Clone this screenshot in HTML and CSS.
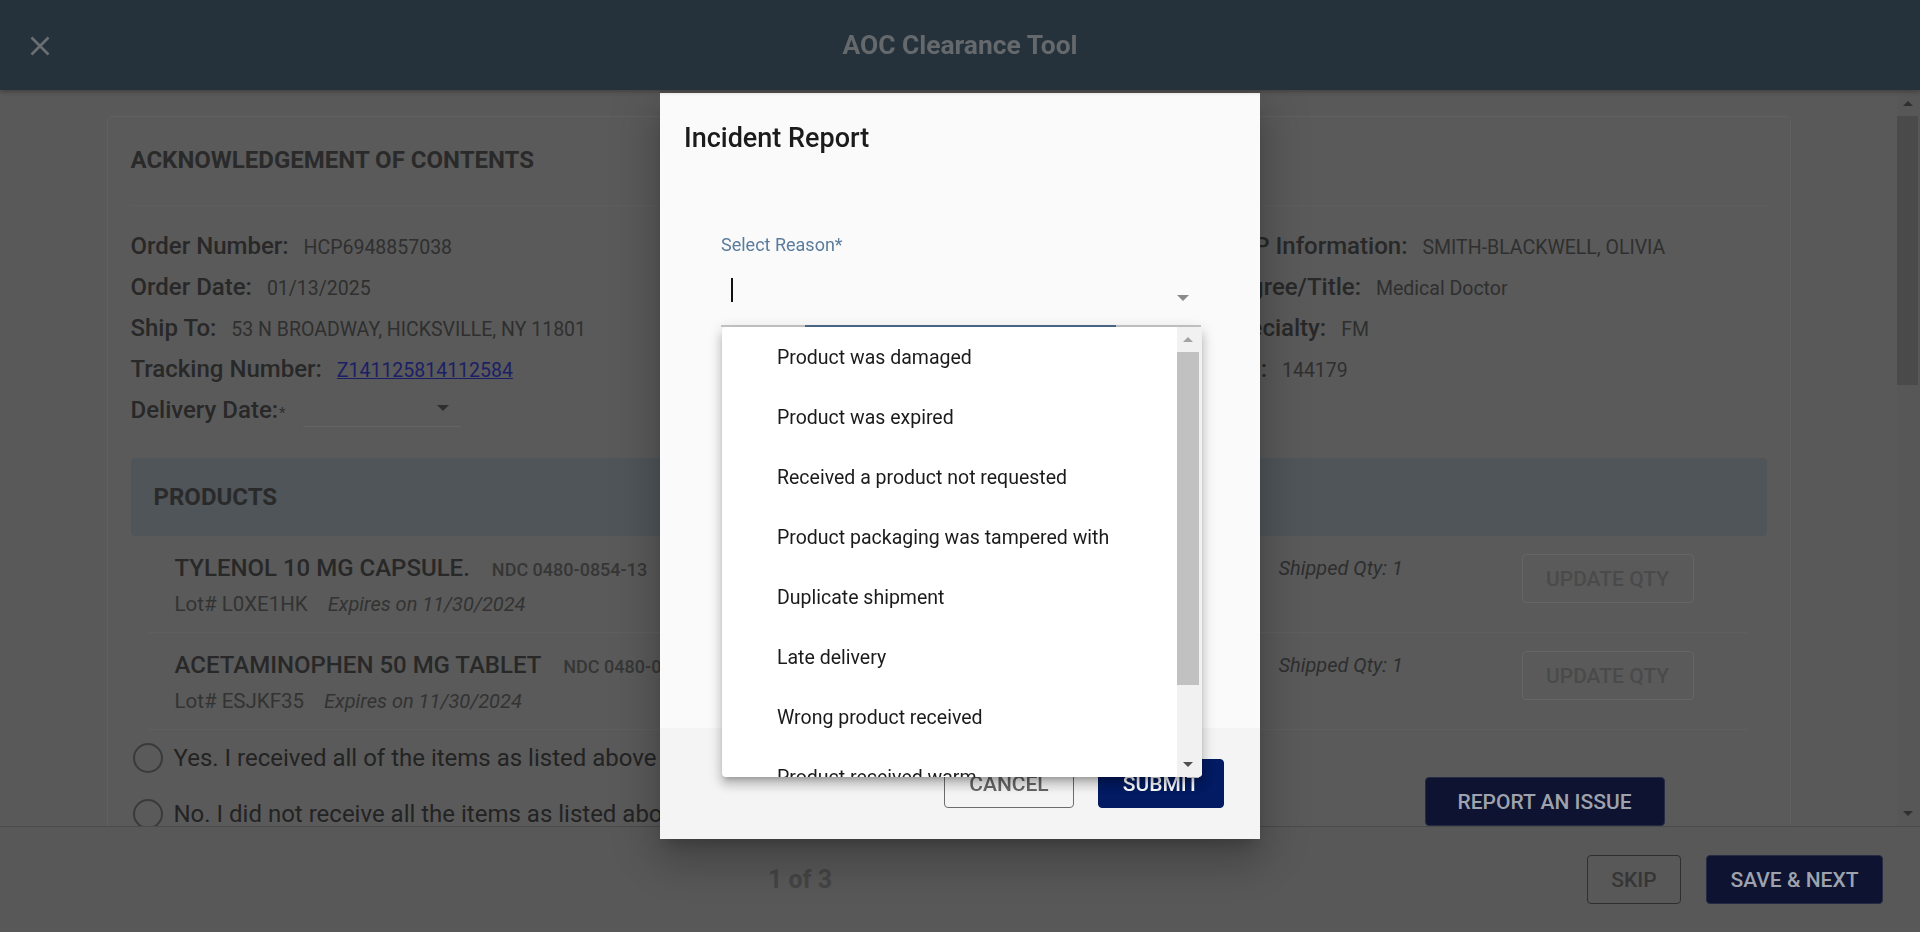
FILE: index.html
```html
<!DOCTYPE html>
<html lang="en">
<head>
<meta charset="utf-8">
<title>AOC Clearance Tool</title>
<link rel="stylesheet" href="styles.css">
</head>
<body>
<div class="app">
  <header class="topbar">
    <div class="topbar-left">
      <svg class="close-x" width="20" height="20" viewBox="0 0 20 20" aria-hidden="true"><path d="M1.5 1.5 L18.5 18.5 M18.5 1.5 L1.5 18.5" stroke="#6b6f72" stroke-width="2.6" fill="none"/></svg>
    </div>
    <h1 class="app-title">AOC Clearance Tool</h1>
    <div class="topbar-right"></div>
  </header>

  <div class="main">
    <div class="scroll-content">
      <section class="card">
        <div class="card-head"><h2>ACKNOWLEDGEMENT OF CONTENTS</h2></div>

        <div class="info-grid">
          <div class="info-col info-left">
            <div class="info-row"><span class="lbl">Order Number:</span><span class="val">HCP6948857038</span></div>
            <div class="info-row"><span class="lbl">Order Date:</span><span class="val">01/13/2025</span></div>
            <div class="info-row"><span class="lbl">Ship To:</span><span class="val">53 N BROADWAY, HICKSVILLE, NY 11801</span></div>
            <div class="info-row"><span class="lbl">Tracking Number:</span><a class="val link" href="#">Z141125814112584</a></div>
            <div class="info-row"><span class="lbl">Delivery Date:</span><span class="req">*</span><span class="mini-select"><span class="caret dark"></span></span></div>
          </div>
          <div class="info-col info-right">
            <div class="info-row"><span class="lbl">HCP Information:</span><span class="val">SMITH-BLACKWELL, OLIVIA</span></div>
            <div class="info-row"><span class="lbl">Degree/Title:</span><span class="val">Medical Doctor</span></div>
            <div class="info-row"><span class="lbl">Specialty:</span><span class="val">FM</span></div>
            <div class="info-row"><span class="lbl">NPI:</span><span class="val">144179</span></div>
          </div>
        </div>

        <div class="products-band">PRODUCTS</div>

        <div class="product-list">
          <div class="product">
            <div class="prod-main">
              <div class="prod-title"><span class="prod-name">TYLENOL 10 MG CAPSULE.</span><span class="ndc">NDC 0480-0854-13</span></div>
              <div class="prod-lot"><span>Lot# L0XE1HK</span><em>Expires on 11/30/2024</em></div>
            </div>
            <div class="prod-qty">Shipped Qty: 1</div>
            <div class="prod-action"><button class="btn btn-ghost">UPDATE QTY</button></div>
          </div>
          <div class="product">
            <div class="prod-main">
              <div class="prod-title"><span class="prod-name">ACETAMINOPHEN 50 MG TABLET</span><span class="ndc">NDC 0480-0854-14</span></div>
              <div class="prod-lot"><span>Lot# ESJKF35</span><em>Expires on 11/30/2024</em></div>
            </div>
            <div class="prod-qty">Shipped Qty: 1</div>
            <div class="prod-action"><button class="btn btn-ghost">UPDATE QTY</button></div>
          </div>
        </div>

        <div class="confirm-row">
          <div class="radios">
            <label class="radio"><span class="circle"></span><span>Yes. I received all of the items as listed above and in good condition.</span></label>
            <label class="radio"><span class="circle"></span><span>No. I did not receive all the items as listed above.</span></label>
          </div>
          <button class="btn btn-navy btn-report">REPORT AN ISSUE</button>
        </div>
        <div class="card-tail"></div>
      </section>
    </div>
    <div class="page-scrollbar">
      <div class="psb-btn"><span class="tri up"></span></div>
      <div class="psb-track"><div class="psb-thumb"></div></div>
      <div class="psb-btn"><span class="tri down"></span></div>
    </div>
  </div>

  <footer class="bottombar">
    <div class="pager">1 of 3</div>
    <button class="btn btn-skip">SKIP</button>
    <button class="btn btn-navy btn-save">SAVE &amp; NEXT</button>
  </footer>
</div>

<div class="overlay">
  <div class="modal">
    <div class="modal-body">
      <h3 class="modal-title">Incident Report</h3>
      <div class="field">
        <div class="field-label">Select Reason*</div>
        <div class="field-input">
          <span class="cursor"></span>
          <span class="caret grey"></span>
        </div>
        <div class="field-underline"></div>
      </div>
    </div>
    <div class="modal-footer">
      <button class="btn btn-cancel">CANCEL</button>
      <button class="btn btn-submit">SUBMIT</button>
    </div>

    <div class="dropdown">
      <ul class="options">
        <li>Product was damaged</li>
        <li>Product was expired</li>
        <li>Received a product not requested</li>
        <li>Product packaging was tampered with</li>
        <li>Duplicate shipment</li>
        <li>Late delivery</li>
        <li>Wrong product received</li>
        <li>Product received warm</li>
        <li>Other</li>
      </ul>
      <div class="dd-scrollbar">
        <div class="dsb-btn"><span class="tri up light"></span></div>
        <div class="dsb-track"><div class="dsb-thumb"></div></div>
        <div class="dsb-btn"><span class="tri down mid"></span></div>
      </div>
    </div>
  </div>
</div>
</body>
</html>
```

FILE: styles.css
```css
* { box-sizing: border-box; }
html, body { margin: 0; padding: 0; height: 100%; }
body {
  font-family: Roboto, "Liberation Sans", Arial, sans-serif;
  background: #595959;
  color: #2f2f2f;
  overflow: hidden;
}
button { font-family: inherit; cursor: pointer; }

.app { height: 932px; display: flex; flex-direction: column; }

/* header */
.topbar {
  height: 90px;
  flex: none;
  background: #25313b;
  display: grid;
  grid-template-columns: 1fr auto 1fr;
  align-items: center;
  box-shadow: 0 2px 4px rgba(0,0,0,0.25);
  z-index: 1;
}
.topbar-left { padding-left: 30px; display: flex; align-items: center; }
.close-x { display: block; margin-top: 1px; }
.app-title {
  margin: 0;
  font-size: 26.4px;
  font-weight: 700;
  color: #65696c;
}

/* main scrolling area */
.main { flex: 1; min-height: 0; display: flex; }
.scroll-content { flex: 1; overflow: hidden; padding-top: 26px; }

.card {
  width: 1684px;
  margin: 0 auto;
  background: #5a5a5a;
  border: 1px solid #606060;
  border-radius: 4px;
  padding: 0 23px;
}
.card-head {
  height: 89px;
  border-bottom: 1px solid #5e5e5e;
  padding-top: 28px;
}
.card-head h2 {
  margin: 0;
  font-size: 24px;
  line-height: 30px;
  font-weight: 700;
  color: #2a2a2a;
}

.info-grid { display: flex; padding-top: 20px; }
.info-left { width: 1091px; flex: none; }
.info-right { flex: 1; }
.info-row { display: flex; align-items: baseline; height: 41px; line-height: 41px; white-space: nowrap; }
.lbl { font-size: 24px; font-weight: 500; color: #282828; }
.val { font-size: 19.5px; font-weight: 400; color: #2f2f2f; margin-left: 15px; }
.link { color: #1b1f66; text-decoration: underline; }
.req { font-size: 15px; color: #2f2f2f; margin-left: 1px; }
.mini-select {
  align-self: flex-start;
  width: 158px;
  height: 37px;
  margin-left: 17px;
  border-bottom: 1px solid #646464;
  display: flex;
  justify-content: flex-end;
  align-items: center;
  padding-right: 12px;
}

.caret { width: 0; height: 0; border-left: 6px solid transparent; border-right: 6px solid transparent; border-top: 6px solid #2e2e2e; }
.caret.grey { border-top-color: #8a8a8a; }

.products-band {
  margin-top: 27px;
  height: 78px;
  line-height: 78px;
  padding-left: 23px;
  background: #4f5559;
  border-radius: 4px;
  font-size: 24px;
  font-weight: 700;
  color: #2a2a2a;
}

.product-list { margin: 0 20px 0 18px; }
.product {
  display: grid;
  grid-template-columns: 1fr 243px 172px;
  height: 97px;
  padding: 17px 53px 0 26px;
  border-bottom: 1px solid #5f5f5f;
  overflow: hidden;
}
.prod-title { display: flex; align-items: baseline; height: 30px; line-height: 30px; white-space: nowrap; }
.prod-name { font-size: 24px; font-weight: 500; color: #282828; }
.ndc { font-size: 18px; font-weight: 500; color: #363636; margin-left: 22px; }
.prod-lot { margin-top: 7px; height: 28px; line-height: 28px; font-size: 20.5px; font-weight: 400; color: #333; white-space: nowrap; }
.prod-lot em { margin-left: 20px; font-size: 20px; }
.prod-qty { font-size: 20px; font-style: italic; line-height: 30px; color: #2e2e2e; }
.prod-action { padding-top: 1px; }

.btn {
  height: 49px;
  border-radius: 4px;
  font-size: 21px;
  font-weight: 500;
  padding: 0;
  text-align: center;
}
.btn-ghost { width: 172px; background: transparent; border: 1px solid #666; color: #4a4a4a; }
.btn-navy { background: #0d1330; border: 1px solid #262b44; color: #9ea2ad; }

.confirm-row { display: flex; align-items: flex-start; }
.radios { flex: 1; padding-left: 2px; }
.radio { display: flex; align-items: center; height: 56px; font-size: 24px; font-weight: 400; color: #232323; white-space: nowrap; }
.circle { width: 30px; height: 30px; border: 2px solid #3a3a3a; border-radius: 50%; margin-right: 11px; flex: none; }
.btn-report { width: 240px; margin-top: 47px; margin-right: 102px; flex: none; }
.card-tail { height: 120px; }

/* page scrollbar */
.page-scrollbar { width: 23px; flex: none; display: flex; flex-direction: column; padding-right: 2px; background: #575757; }
.psb-btn { height: 26px; display: flex; align-items: center; justify-content: center; }
.psb-track { flex: 1; }
.psb-thumb { height: 269px; background: #4a4a4a; }
.tri { width: 0; height: 0; border-left: 5px solid transparent; border-right: 5px solid transparent; }
.tri.up { border-bottom: 5px solid #2f2f2f; }
.tri.down { border-top: 5px solid #2f2f2f; }

/* footer */
.bottombar {
  height: 106px;
  flex: none;
  border-top: 1px solid #4a4a4a;
  background: #585858;
  display: flex;
  align-items: center;
}
.pager { flex: 1; text-align: center; padding-left: 13px; font-size: 25px; font-weight: 700; color: #444; }
.btn-skip { width: 94px; margin-right: 25px; background: transparent; border: 1px solid #2f2f2f; color: #363636; }
.btn-save { width: 177px; margin-right: 37px; }

/* modal */
.overlay { position: fixed; inset: 0; }
.modal {
  position: relative;
  width: 600px;
  height: 746px;
  margin: 93px auto 0;
  background: #fafafa;
  display: flex;
  flex-direction: column;
  box-shadow: 0 11px 15px -7px rgba(0,0,0,0.2), 0 24px 38px 3px rgba(0,0,0,0.14), 0 9px 46px 8px rgba(0,0,0,0.12);
}
.modal-body { flex: 1; padding: 29px 24px 0 24px; }
.modal-title { margin: 0; font-size: 27px; line-height: 32px; font-weight: 500; color: #1b1b1b; }
.field { width: 480px; margin: 81px 0 0 37px; }
.field-label { font-size: 18px; line-height: 20px; color: #5b7c9c; }
.field-input { height: 70px; display: flex; justify-content: space-between; align-items: flex-start; padding: 23px 12px 0 10px; }
.cursor { width: 2px; height: 24px; background: #111; }
.field-input .caret { margin-top: 17px; }
.field-underline { height: 2px; background: linear-gradient(to right, #c8c8c8 0 84px, #4d6b8a 84px 395px, #c8c8c8 395px); }

.modal-footer {
  height: 111px;
  flex: none;
  background: #f4f4f4;
  display: flex;
  justify-content: flex-end;
  align-items: center;
  gap: 24px;
  padding-right: 36px;
}
.btn-cancel { width: 130px; background: transparent; border: 1px solid #6d6d6d; color: #666; }
.btn-submit { width: 126px; background: #021b62; border: 1px solid #021b62; color: #fff; }

/* dropdown */
.dropdown {
  position: absolute;
  left: 62px;
  top: 234px;
  width: 480px;
  height: 450px;
  background: #fff;
  border-radius: 4px;
  display: flex;
  overflow: hidden;
  box-shadow: 0 5px 5px -3px rgba(0,0,0,0.2), 0 8px 10px 1px rgba(0,0,0,0.14), 0 3px 14px 2px rgba(0,0,0,0.12);
  z-index: 5;
}
.options { flex: 1; list-style: none; margin: 0; padding: 1px 0 0 0; overflow: hidden; }
.options li {
  height: 60px;
  line-height: 60px;
  padding-left: 55px;
  font-size: 19.5px;
  color: #1b1b1b;
  white-space: nowrap;
}
.dd-scrollbar { width: 25px; flex: none; display: flex; flex-direction: column; background: #f1f1f1; padding: 0 3px 0 0; }
.dsb-btn { height: 25px; display: flex; align-items: center; justify-content: center; }
.dsb-track { flex: 1; }
.dsb-thumb { height: 333px; background: #c1c1c1; }
.tri.light.up { border-bottom-color: #a3a3a3; }
.tri.mid.down { border-top-color: #505050; }
```
